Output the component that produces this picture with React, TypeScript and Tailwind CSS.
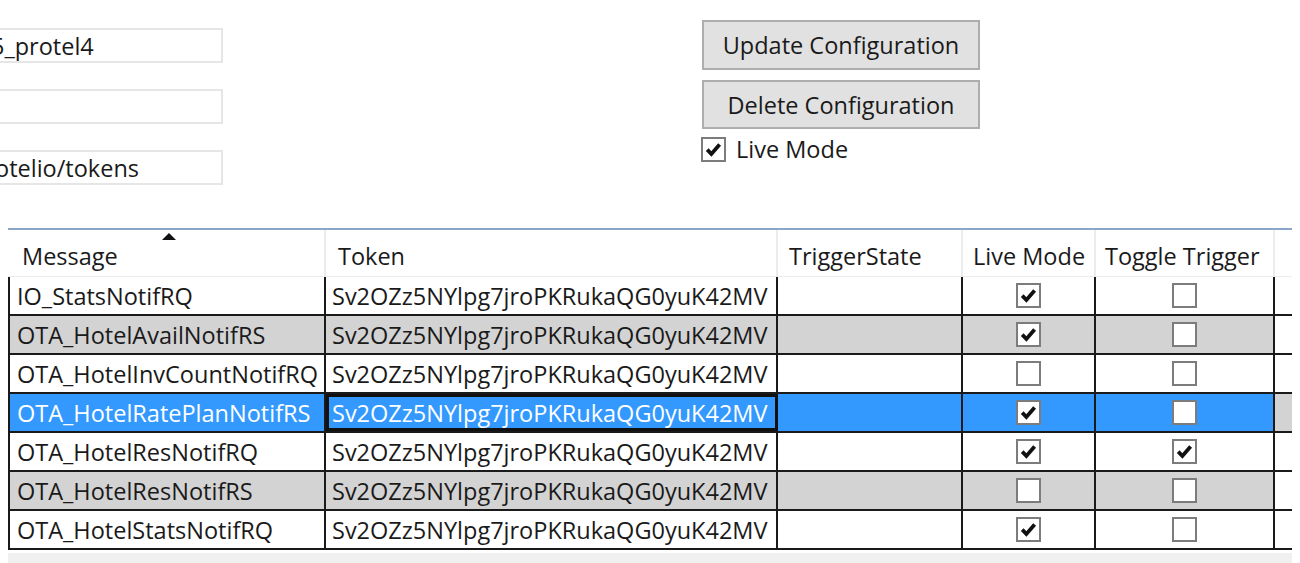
import React from "react";

interface Row {
  message: string;
  live: boolean;
  toggle: boolean;
  tone: "white" | "gray" | "selected";
}

const TOKEN = "Sv2OZz5NYlpg7jroPKRukaQG0yuK42MV";

const rows: Row[] = [
  { message: "IO_StatsNotifRQ", live: true, toggle: false, tone: "white" },
  { message: "OTA_HotelAvailNotifRS", live: true, toggle: false, tone: "gray" },
  { message: "OTA_HotelInvCountNotifRQ", live: false, toggle: false, tone: "white" },
  { message: "OTA_HotelRatePlanNotifRS", live: true, toggle: false, tone: "selected" },
  { message: "OTA_HotelResNotifRQ", live: true, toggle: true, tone: "white" },
  { message: "OTA_HotelResNotifRS", live: false, toggle: false, tone: "gray" },
  { message: "OTA_HotelStatsNotifRQ", live: true, toggle: false, tone: "white" },
];

const CheckBox: React.FC<{ checked: boolean }> = ({ checked }) => (
  <div className="w-[25px] h-[25px] bg-white border-2 border-[#7c7c7c] flex items-center justify-center">
    {checked && (
      <svg width="19" height="19" viewBox="0 0 19 19">
        <path d="M3.2 9.6 L7.4 14 L15.6 4.6" fill="none" stroke="#111" strokeWidth="3.8" strokeLinejoin="miter" />
      </svg>
    )}
  </div>
);

const TextBox: React.FC<{ text?: string; shift?: string }> = ({ text, shift }) => (
  <div className="-ml-[4px] w-[227px] h-[35px] border-2 border-[#e6e6e6] bg-white overflow-hidden flex items-center pt-[3px]">
    {text && <span className={`whitespace-nowrap ${shift}`}>{text}</span>}
  </div>
);

const Button: React.FC<{ label: string; h: string }> = ({ label, h }) => (
  <button className={`w-[278px] ${h} bg-[#e1e1e1] border-2 border-[#adadad] flex items-center justify-center pt-[2px] text-[#1a1a1a]`}>
    {label}
  </button>
);

export default function App() {
  return (
    <div
      className="relative w-[1300px] h-[563px] bg-white overflow-hidden text-[23.5px] text-[#1a1a1a] leading-none"
      style={{ fontFamily: '"Open Sans", "Noto Sans", sans-serif' }}
    >
      {/* configuration form */}
      <div className="flex h-[228px]">
        <div className="w-[223px] flex flex-col pt-[28px] gap-[26px]">
          <TextBox text="5_protel4" shift="-ml-[7px]" />
          <TextBox />
          <TextBox text="otelio/tokens" shift="-ml-[3px]" />
        </div>
        <div className="ml-[479px] pt-[20px] flex flex-col">
          <Button label="Update Configuration" h="h-[50px]" />
          <div className="h-[10px]" />
          <Button label="Delete Configuration" h="h-[49px]" />
          <div className="flex items-center gap-[10px] mt-[8px] -ml-[1px]">
            <CheckBox checked />
            <span>Live Mode</span>
          </div>
        </div>
      </div>

      {/* grid */}
      <div className="ml-[8px] w-[1284px]">
        <div className="h-[2px] bg-[#8aa6c8]" />
        <div className="flex h-[47px] border-b border-[#ececec]">
          <div className="relative w-[318px] border-r-2 border-[#ececec] flex items-center pt-[7px] pl-[14px]">
            <svg className="absolute left-[154px] top-[3px]" width="14" height="7" viewBox="0 0 14 7">
              <path d="M0 7 L7 0 L14 7 Z" fill="#111" />
            </svg>
            Message
          </div>
          <div className="w-[452px] border-r-2 border-[#ececec] flex items-center pt-[7px] pl-[12px]">Token</div>
          <div className="w-[185px] border-r-2 border-[#ececec] flex items-center pt-[7px] pl-[11px]">TriggerState</div>
          <div className="w-[133px] border-r-2 border-[#ececec] flex items-center pt-[7px] pl-[10px]">Live Mode</div>
          <div className="w-[179px] border-r-2 border-[#ececec] flex items-center pt-[7px] pl-[9px]">Toggle Trigger</div>
        </div>

        {rows.map((r) => {
          const bg = r.tone === "selected" ? "bg-[#3399ff] text-white" : r.tone === "gray" ? "bg-[#d3d3d3]" : "bg-white";
          return (
            <div key={r.message} className="flex h-[39px] border-b-2 border-[#1a1a1a]">
              <div className={`w-[318px] border-l-2 border-r-2 border-[#1a1a1a] flex items-center pt-[3px] pl-[7px] ${bg}`}>
                {r.message}
              </div>
              <div
                className={`w-[452px] border-r-2 border-[#1a1a1a] flex items-center pt-[3px] pl-[6px] ${bg} ${
                  r.tone === "selected" ? "outline-[3px] outline-[#111] -outline-offset-[3px]" : ""
                }`}
              >
                {TOKEN}
              </div>
              <div className={`w-[185px] border-r-2 border-[#1a1a1a] ${bg}`} />
              <div className={`w-[133px] border-r-2 border-[#1a1a1a] flex items-center justify-center ${bg}`}>
                <CheckBox checked={r.live} />
              </div>
              <div className={`w-[179px] border-r-2 border-[#1a1a1a] flex items-center justify-center ${bg}`}>
                <CheckBox checked={r.toggle} />
              </div>
              <div className={`flex-1 ${r.tone === "selected" ? "bg-[#d3d3d3]" : "bg-white"}`} />
            </div>
          );
        })}

        <div className="mt-[3px] h-[12px] bg-[#f0f0f0]" />
      </div>
    </div>
  );
}
